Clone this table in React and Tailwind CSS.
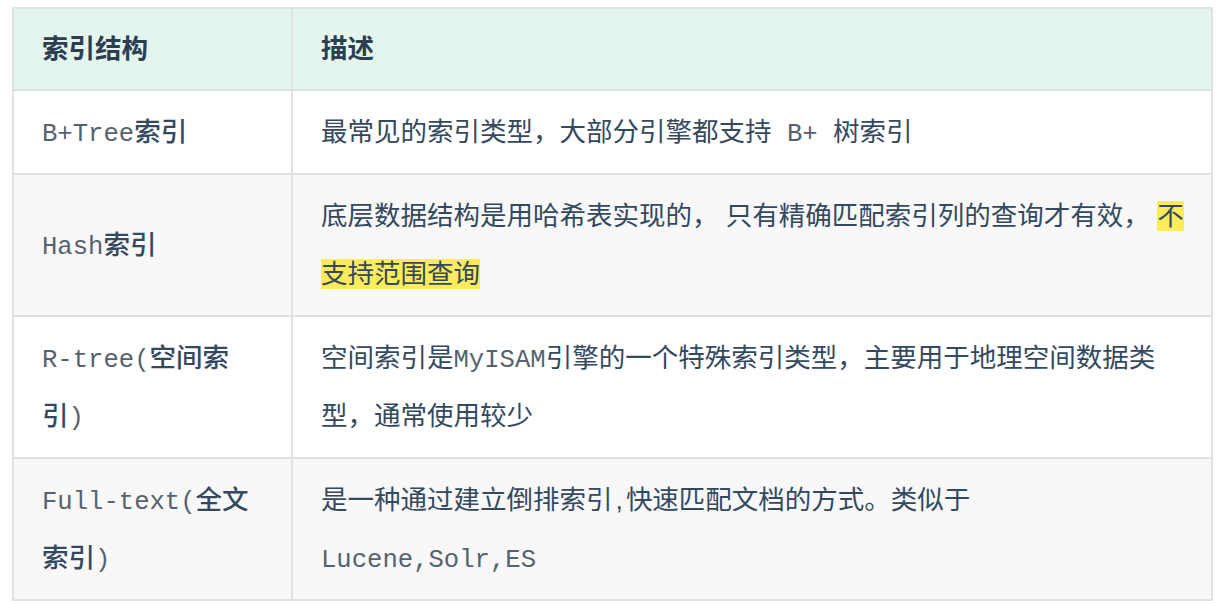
import React from "react";

const mono = "font-['Liberation_Mono',monospace] text-[25.6px] leading-none text-[#56626e] font-normal";

const rows = [
  {
    name: (
      <>
        <span className={mono}>B+Tree</span>索引
      </>
    ),
    desc: (
      <>
        最常见的索引类型，大部分引擎都支持 <code className={`px-2 ${mono}`}>B+</code> 树索引
      </>
    ),
  },
  {
    name: (
      <>
        <span className={mono}>Hash</span>索引
      </>
    ),
    desc: (
      <>
        底层数据结构是用哈希表实现的， 只有精确匹配索引列的查询才有效， <span className="bg-[#fcec5c]">不</span>
        <br />
        <span className="bg-[#fcec5c]">支持范围查询</span>
      </>
    ),
  },
  {
    name: (
      <>
        <span className={mono}>R-tree(</span>空间索
        <br />引<span className={mono}>)</span>
      </>
    ),
    desc: (
      <>
        空间索引是<span className={mono}>MyISAM</span>引擎的一个特殊索引类型，主要用于地理空间数据类
        <br />
        型，通常使用较少
      </>
    ),
  },
  {
    name: (
      <>
        <span className={mono}>Full-text(</span>全文
        <br />索引<span className={mono}>)</span>
      </>
    ),
    desc: (
      <>
        是一种通过建立倒排索引<span className="px-[3px]">,</span>快速匹配文档的方式。类似于
        <br />
        <span className={mono}>Lucene,Solr,ES</span>
      </>
    ),
  },
];

export default function App() {
  return (
    <div className="min-h-screen bg-white pt-[7px] pl-[12px] font-['Liberation_Sans','Noto_Sans_CJK_SC',sans-serif] text-[26.5px] text-[#34495e]">
      <table className="w-[1201px] table-fixed border-collapse">
        <colgroup>
          <col className="w-[279px]" />
          <col />
        </colgroup>
        <thead>
          <tr className="bg-[#e4f5ee]">
            <th className="border-2 border-[#dfe2e5] px-7 py-3 text-left font-bold leading-[56px] text-[#2c3e50]">
              索引结构
            </th>
            <th className="border-2 border-[#dfe2e5] px-7 py-3 text-left font-bold leading-[56px] text-[#2c3e50]">
              描述
            </th>
          </tr>
        </thead>
        <tbody>
          {rows.map((row, i) => (
            <tr key={i} className={i % 2 === 1 ? "bg-[#f8f8f8]" : "bg-white"}>
              <td className="border-2 border-[#dfe2e5] py-3 pl-7 pr-2 leading-[58px] font-medium">
                {row.name}
              </td>
              <td className="border-2 border-[#dfe2e5] py-3 pl-7 pr-2 leading-[58px]">
                {row.desc}
              </td>
            </tr>
          ))}
        </tbody>
      </table>
    </div>
  );
}
